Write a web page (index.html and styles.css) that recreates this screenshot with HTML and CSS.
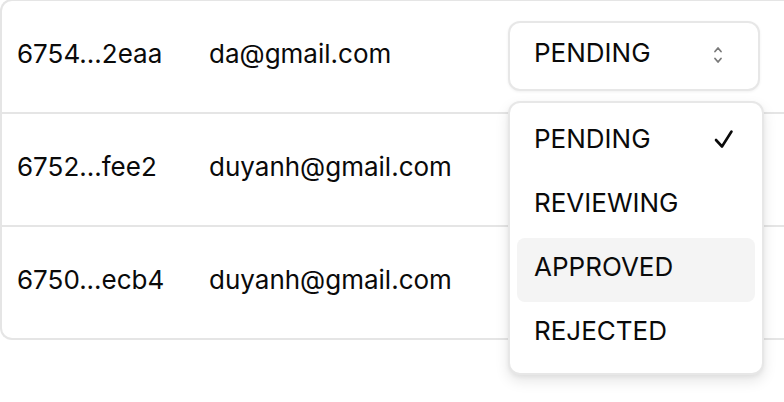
FILE: index.html
```html
<!DOCTYPE html>
<html lang="en">
<head>
<meta charset="utf-8">
<title>Submissions</title>
<link rel="stylesheet" href="styles.css">
</head>
<body>
<div class="table">
  <div class="row">
    <div class="cell cell-id">6754...2eaa</div>
    <div class="cell cell-email">da@gmail.com</div>
    <div class="cell cell-status">
      <div class="select-wrap">
        <button class="select" type="button">
          <span>PENDING</span>
          <svg class="chevrons" width="16" height="24" viewBox="0 0 16 24" aria-hidden="true">
            <polyline points="5,8.5 8,5 11,8.5" />
            <polyline points="5,15.5 8,19 11,15.5" />
          </svg>
        </button>
        <div class="menu">
          <div class="item"><span>PENDING</span>
            <svg class="check" width="20" height="20" viewBox="0 0 20 20" aria-hidden="true">
              <polyline points="2,11 8,17.5 17.5,2.5" />
            </svg>
          </div>
          <div class="item"><span>REVIEWING</span></div>
          <div class="item item-active"><span>APPROVED</span></div>
          <div class="item"><span>REJECTED</span></div>
        </div>
      </div>
    </div>
  </div>
  <div class="row">
    <div class="cell cell-id">6752...fee2</div>
    <div class="cell cell-email">duyanh@gmail.com</div>
    <div class="cell cell-status"></div>
  </div>
  <div class="row">
    <div class="cell cell-id">6750...ecb4</div>
    <div class="cell cell-email">duyanh@gmail.com</div>
    <div class="cell cell-status"></div>
  </div>
</div>
</body>
</html>
```

FILE: styles.css
```css
html, body {
  margin: 0;
  padding: 0;
  height: 100%;
  background: #ffffff;
}

body {
  font-family: Inter, "Noto Sans", sans-serif;
  font-size: 26px;
  color: #0a0a0a;
}

.table {
  margin-top: -1px;
  border: 2px solid #e5e5e5;
  border-right: none;
  border-radius: 12px 0 0 12px;
}

.row {
  display: flex;
  align-items: center;
  height: 111px;
  border-bottom: 2px solid #e5e5e5;
}

.row:last-child {
  border-bottom: none;
}

.cell {
  box-sizing: border-box;
  padding-bottom: 6px;
}

.cell-id {
  width: 191px;
  padding-left: 15px;
}

.cell-email {
  width: 299px;
  padding-left: 16px;
}

.cell-status {
  padding-left: 16px;
  padding-bottom: 2px;
}

.select-wrap {
  position: relative;
  width: 252px;
}

.select {
  box-sizing: border-box;
  width: 252px;
  height: 70px;
  display: flex;
  align-items: center;
  justify-content: space-between;
  padding: 0 32px 6px 24px;
  border: 2px solid #e7e7e7;
  border-radius: 12px;
  background: #fff;
  box-shadow: 0 1px 3px rgba(0, 0, 0, 0.06);
  font: inherit;
  color: #0a0a0a;
}

.chevrons {
  margin-top: 5px;
}

.chevrons polyline {
  fill: none;
  stroke: #7a7a7a;
  stroke-width: 1.8;
  stroke-linecap: round;
  stroke-linejoin: round;
}

.menu {
  position: absolute;
  top: 80px;
  left: 0;
  box-sizing: border-box;
  width: 256px;
  padding: 7px;
  border: 2px solid #e7e7e7;
  border-radius: 12px;
  background: #fff;
  box-shadow: 0 6px 14px rgba(0, 0, 0, 0.10), 0 2px 4px rgba(0, 0, 0, 0.05);
  z-index: 2;
}

.item {
  height: 64px;
  display: flex;
  align-items: center;
  justify-content: space-between;
  box-sizing: border-box;
  padding: 0 21px 6px 17px;
  border-radius: 8px;
}

.item-active {
  background: #f4f4f4;
}

.check polyline {
  fill: none;
  stroke: #0a0a0a;
  stroke-width: 2.6;
  stroke-linecap: round;
  stroke-linejoin: round;
}
```
